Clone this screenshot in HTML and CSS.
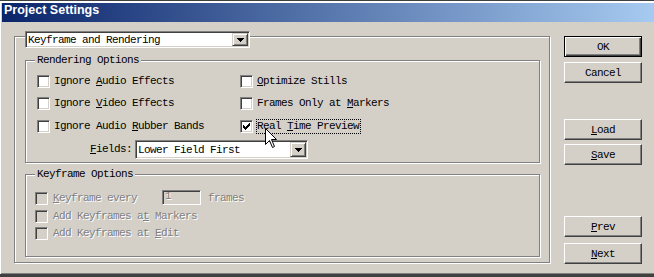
FILE: index.html
```html
<!DOCTYPE html>
<html lang="en">
<head>
    <meta charset="UTF-8">
    <title>Project Settings</title>
    <link rel="stylesheet" href="styles.css">
</head>
<body>
<div class="window">
    <div class="titlebar">Project Settings</div>
    <div class="content">
        <div class="frame">
            <div class="combo combo-main">
                <span class="combo-text">Keyframe and Rendering</span>
                <span class="combo-btn"><svg width="7" height="4" shape-rendering="crispEdges"><path d="M0 0H7V1H6V2H5V3H4V4H3V3H2V2H1V1H0Z"/></svg></span>
            </div>

            <div class="group group-render">
                <div class="group-title">Rendering Options</div>
                <div class="opts">
                    <label class="opt"><span class="cb"></span><span class="txt">Ignore <u>A</u>udio Effects</span></label>
                    <label class="opt"><span class="cb"></span><span class="txt"><u>O</u>ptimize Stills</span></label>
                    <label class="opt"><span class="cb"></span><span class="txt">Ignore <u>V</u>ideo Effects</span></label>
                    <label class="opt"><span class="cb"></span><span class="txt">Frames Only at <u>M</u>arkers</span></label>
                    <label class="opt"><span class="cb"></span><span class="txt">Ignore Audio <u>R</u>ubber Bands</span></label>
                    <label class="opt"><span class="cb checked"><svg width="7" height="7" shape-rendering="crispEdges"><path d="M0 2h1v3H0zM1 3h1v3H1zM2 4h1v3H2zM3 3h1v3H3zM4 2h1v3H4zM5 1h1v3H5zM6 0h1v3H6z"/></svg></span><span class="txt focus">Real <u>T</u>ime Preview</span></label>
                </div>
                <div class="fields">
                    <span class="txt"><u>F</u>ields:</span>
                    <div class="combo combo-fields">
                        <span class="combo-text">Lower Field First</span>
                        <span class="combo-btn"><svg width="7" height="4" shape-rendering="crispEdges"><path d="M0 0H7V1H6V2H5V3H4V4H3V3H2V2H1V1H0Z"/></svg></span>
                    </div>
                </div>
            </div>

            <div class="group group-key">
                <div class="group-title">Keyframe Options</div>
                <div class="kopts">
                    <div class="opt dis"><span class="cb"></span><span class="txt"><u>K</u>eyframe every</span><span class="num">1</span><span class="txt frames">frames</span></div>
                    <div class="opt dis"><span class="cb"></span><span class="txt">Add Keyframes a<u>t</u> Markers</span></div>
                    <div class="opt dis"><span class="cb"></span><span class="txt">Add Keyframes at <u>E</u>dit</span></div>
                </div>
            </div>
        </div>

        <div class="buttons">
            <button class="btn btn-default">OK</button>
            <button class="btn btn-cancel">Cancel</button>
            <button class="btn btn-load"><u>L</u>oad</button>
            <button class="btn btn-save"><u>S</u>ave</button>
            <button class="btn btn-prev"><u>P</u>rev</button>
            <button class="btn btn-next"><u>N</u>ext</button>
        </div>
    </div>

    <svg class="cursor" width="13" height="21" viewBox="0 0 13 21"><path d="M0.5 0.5V16.5L4.5 12.5L7.5 19.5L9.5 18.5L6.5 11.5H11.5Z" fill="#fff" stroke="#000"/></svg>
</div>
</body>
</html>
```

FILE: styles.css
```css
body {
    margin: 0;
    background: #d4d0c8;
    font-family: "Liberation Mono", monospace;
    font-size: 11px;
    letter-spacing: -0.6px;
    color: #000;
}
.window {
    position: relative;
    height: 277px;
    box-sizing: border-box;
    border-top: 1px solid #404040;
    border-bottom: 3px solid #404040;
    box-shadow: inset 1px 2px 0 #fff, inset 0 -1px 0 #808080;
    padding: 2px 0 0 2px;
    background: #d4d0c8;
}
.titlebar {
    height: 19px;
    line-height: 19px;
    padding-left: 2px;
    background: linear-gradient(to right, #0a246a, #a6caf0);
    color: #fff;
    font: bold 12.5px "Liberation Sans", Arial, sans-serif;
    letter-spacing: 0;
}
.content {
    display: flex;
    align-items: flex-start;
    padding: 14px 0 0 12px;
}

/* etched frames */
.frame, .group {
    box-sizing: border-box;
    border: 1px solid #808080;
    box-shadow: inset 1px 1px 0 #fff, 1px 1px 0 #fff;
}
.frame {
    width: 536px;
    height: 227px;
    padding: 0 9px 0 10px;
}
.group-title {
    width: max-content;
    margin: -7px 0 0 9px;
    padding: 0 2px;
    line-height: 13px;
    background: #d4d0c8;
}
.group-render {
    margin-top: 12px;
    padding-bottom: 3px;
}
.group-key {
    margin-top: 11px;
    padding-bottom: 14px;
}

/* combo boxes */
.combo {
    display: flex;
    box-sizing: border-box;
    padding: 1px;
    background: #fff;
    border: 1px solid;
    border-color: #808080 #fff #fff #808080;
    box-shadow: inset 1px 1px 0 #404040, inset -1px -1px 0 #d4d0c8;
}
.combo-main {
    width: 225px;
    height: 17px;
    margin-top: -6px;
}
.combo-fields {
    width: 173px;
    height: 19px;
    margin-left: 3px;
}
.combo-text {
    flex: 1;
    padding-left: 1px;
    display: flex;
    align-items: center;
}
.combo-btn {
    width: 16px;
    box-sizing: border-box;
    display: flex;
    align-items: center;
    justify-content: center;
    background: #d4d0c8;
    border: 1px solid;
    border-color: #d4d0c8 #404040 #404040 #d4d0c8;
    box-shadow: inset 1px 1px 0 #fff, inset -1px -1px 0 #808080;
}

/* checkboxes */
.opts {
    display: grid;
    grid-template-columns: 203px auto;
    grid-template-rows: 22px 23px 23px;
    margin: 3px 0 0 11px;
}
.opt {
    display: flex;
    align-items: flex-start;
}
.cb {
    width: 13px;
    height: 13px;
    flex: none;
    box-sizing: border-box;
    margin: 5px 4px 0 0;
    display: flex;
    align-items: center;
    justify-content: center;
    background: #fff;
    border: 1px solid;
    border-color: #808080 #fff #fff #808080;
    box-shadow: inset 1px 1px 0 #404040, inset -1px -1px 0 #d4d0c8;
}
.txt {
    line-height: 13px;
    margin-top: 5px;
    white-space: pre;
}
.focus {
    border: 1px dotted #000;
    margin: 4px -1px -1px -1px;
    padding-right: 1px;
}
.fields {
    display: flex;
    align-items: center;
    margin: 2px 0 0 64px;
}
.fields .txt {
    margin-top: 0;
}

/* keyframe options (disabled) */
.kopts {
    display: grid;
    grid-template-rows: 18px 17px 17px;
    margin: 9px 0 0 9px;
}
.kopts .cb {
    margin: 2px 5px 0 0;
    background: #d4d0c8;
}
.kopts .txt {
    margin-top: 2px;
}
.dis {
    color: #808080;
    text-shadow: 1px 1px 0 #fff;
}
.num {
    width: 39px;
    height: 15px;
    box-sizing: border-box;
    margin-left: 25px;
    padding-left: 2px;
    line-height: 11px;
    background: #d4d0c8;
    border: 1px solid;
    border-color: #808080 #fff #fff #808080;
    box-shadow: inset 1px 1px 0 #404040, inset -1px -1px 0 #d4d0c8;
}
.frames {
    margin-left: 7px;
}

/* buttons */
.buttons {
    display: flex;
    flex-direction: column;
    margin-left: 14px;
}
.btn {
    width: 78px;
    height: 21px;
    padding: 0;
    font: inherit;
    letter-spacing: inherit;
    color: #000;
    background: #d4d0c8;
    border: 1px solid;
    border-color: #fff #404040 #404040 #fff;
    box-shadow: inset -1px -1px 0 #808080;
}
.btn-default {
    border: 1px solid #000;
    box-shadow: inset 1px 1px 0 #fff, inset -1px -1px 0 #404040, inset -2px -2px 0 #808080;
}
.btn-cancel { margin-top: 5px; }
.btn-load { margin-top: 36px; }
.btn-save { margin-top: 4px; }
.btn-prev { margin-top: 51px; }
.btn-next { margin-top: 6px; }

.cursor {
    position: absolute;
    left: 265px;
    top: 127px;
}
```
